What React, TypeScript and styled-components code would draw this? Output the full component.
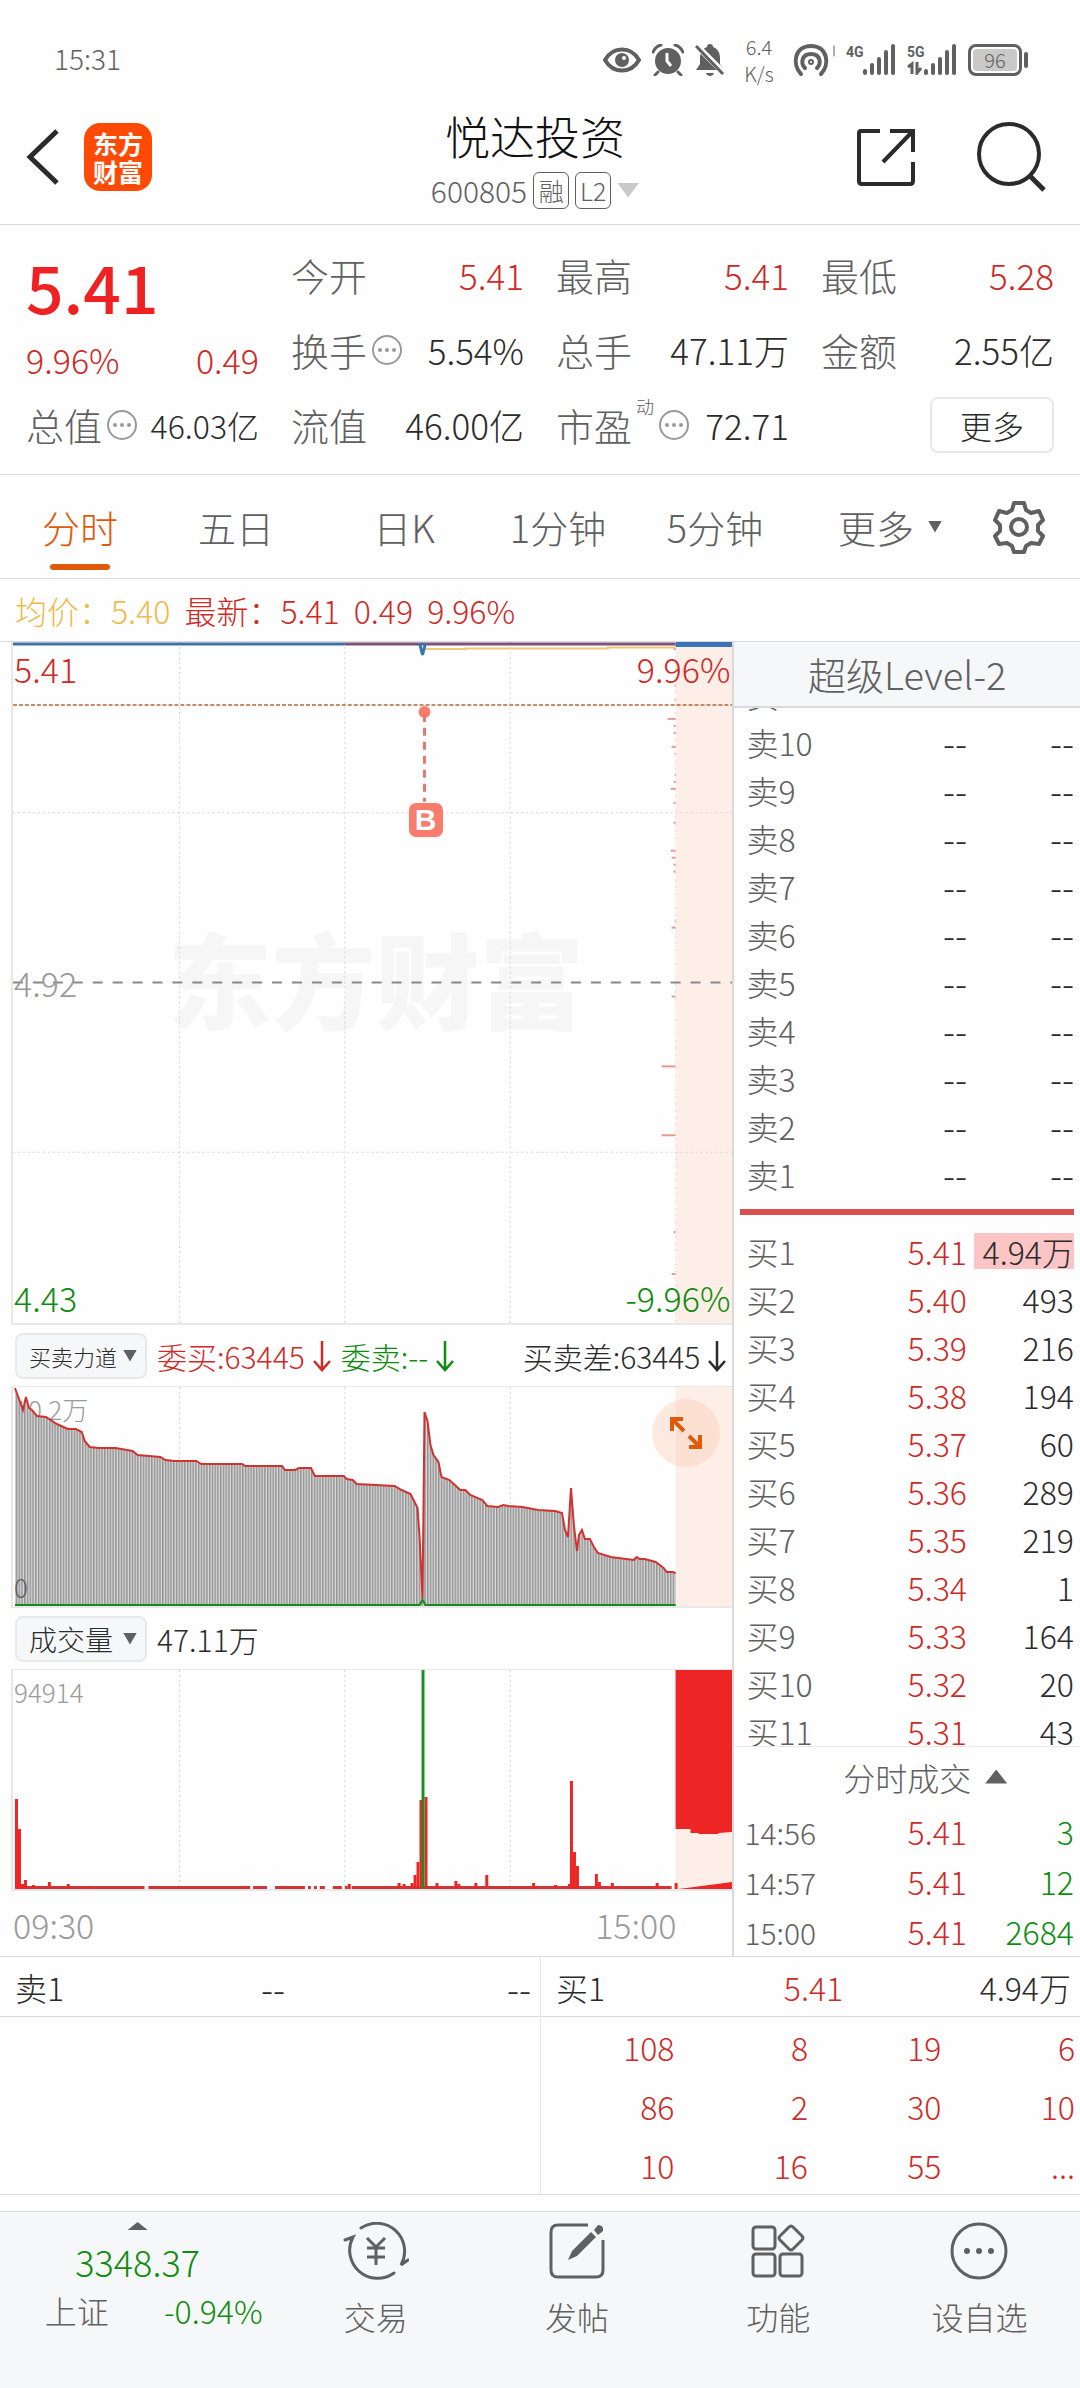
import React from 'react';
import styled, { createGlobalStyle } from 'styled-components';

const c = {
  text: '#2b2b2b',
  grey: '#606060',
  pale: '#9a9a9a',
  red: '#cc2b28',
  green: '#0f8c0f',
  orange: '#e05a0c',
  line: '#d8dadd',
  soft: '#e8e8ea',
  panel: '#f6f7f9',
  pink: '#fdeee7',
};

const Global = createGlobalStyle`
  *, *::before, *::after { box-sizing: border-box; }
  body {
    margin: 0;
    background: #fefefe;
    color: ${c.text};
    font-family: "Noto Sans CJK SC", sans-serif;
    font-size: 32px;
    font-weight: 300;
  }
  button, select { font: inherit; color: inherit; background: none; border: 0; padding: 0; margin: 0; }
  table { border-collapse: collapse; width: 100%; table-layout: fixed; }
  th, td { padding: 0; font-weight: inherit; text-align: right; white-space: nowrap; }
  svg { display: block; flex: none; }
  h1, p, dl, dd, dt { margin: 0; font-weight: inherit; }
`;

type Tone = 'red' | 'green' | 'text' | 'grey';
const Value = styled.span<{ $tone?: Tone; $size?: number }>`
  color: ${(p) => c[p.$tone ?? 'text']};
  font-size: ${(p) => p.$size ?? 32}px;
`;

/* status bar */
const StatusBar = styled.header`
  display: flex;
  align-items: center;
  justify-content: space-between;
  height: 108px;
  padding: 12px 52px 0 54px;
  color: ${c.grey};
`;
const Clock = styled.time`
  font-size: 28px;
  padding-bottom: 4px;
`;
const StatusIcons = styled.div`
  display: flex;
  align-items: center;
  gap: 11px;
`;
const NetSpeed = styled.span`
  width: 46px;
  text-align: center;
  font-size: 20px;
  line-height: 27px;
`;
const Signal = styled.span`
  display: flex;
  align-items: flex-end;
  height: 32px;
`;
const SignalTag = styled.span`
  display: flex;
  flex-direction: column;
  align-self: flex-start;
  gap: 1px;
  width: 16px;
  font: 700 14px/16px Roboto, sans-serif;
  white-space: nowrap;
`;
const Battery = styled.span`
  display: flex;
  align-items: center;
  gap: 2px;
  &::after { content: ''; width: 4px; height: 16px; border-radius: 2px; background: ${c.grey}; }
`;
const BatteryBody = styled.span`
  width: 54px;
  height: 32px;
  border: 3px solid ${c.grey};
  border-radius: 8px;
  padding: 2px;
`;
const BatteryLevel = styled.span`
  display: block;
  border-radius: 4px;
  background: #c9c9c9;
  text-align: center;
  font-size: 20px;
  line-height: 22px;
`;

/* title bar */
const TitleBar = styled.div`
  display: grid;
  grid-template-columns: 1fr auto 1fr;
  align-items: center;
  height: 117px;
  padding: 0 34px 0 24px;
  border-bottom: 1px solid ${c.line};
`;
const Side = styled.div<{ $end?: boolean }>`
  display: flex;
  align-items: center;
  justify-content: ${(p) => (p.$end ? 'flex-end' : 'flex-start')};
  gap: ${(p) => (p.$end ? 60 : 24)}px;
  padding-bottom: 18px;
`;
const IconButton = styled.button`display: flex; color: ${c.text};`;
const AppLogo = styled.span`
  display: grid;
  place-content: center;
  width: 68px;
  height: 68px;
  border-radius: 16px;
  background: #ff4a05;
  color: #fff;
  font-size: 25px;
  font-weight: 700;
  line-height: 28px;
  text-align: center;
`;
const TitleBlock = styled.div`
  display: flex;
  flex-direction: column;
  align-items: center;
`;
const StockName = styled.h1`
  font-size: 45px;
  line-height: 48px;
  color: #111;
`;
const StockCode = styled.div`
  display: flex;
  align-items: center;
  gap: 6px;
  height: 60px;
  color: ${c.grey};
  font-size: 30px;
`;
const Badge = styled.span`
  display: grid;
  place-content: center;
  width: 36px;
  height: 37px;
  border: 1px solid ${c.grey};
  border-radius: 6px;
  font-size: 25px;
`;
const Caret = styled.span<{ $w?: number; $h?: number; $up?: boolean; $color?: string }>`
  flex: none;
  width: ${(p) => p.$w ?? 14}px;
  height: ${(p) => p.$h ?? 12}px;
  background: ${(p) => p.$color ?? c.grey};
  clip-path: ${(p) => (p.$up ? 'polygon(50% 0, 100% 100%, 0 100%)' : 'polygon(0 0, 100% 0, 50% 100%)')};
`;

/* quote summary */
const Quote = styled.section`
  display: grid;
  grid-template-columns: repeat(4, 1fr);
  grid-auto-rows: 75px;
  column-gap: 32px;
  padding: 12px 26px;
  border-bottom: 1px solid ${c.line};
`;
const LastPrice = styled.div`
  grid-row: span 2;
  display: flex;
  flex-direction: column;
  justify-content: space-between;
  color: ${c.red};
`;
const BigPrice = styled.strong`
  font-size: 66px;
  font-weight: 500;
  line-height: 96px;
  color: #ee2222;
`;
const Change = styled.div`
  display: flex;
  justify-content: space-between;
  font-size: 34px;
  line-height: 54px;
`;
const Stat = styled.dl`
  display: flex;
  align-items: center;
  justify-content: space-between;
  white-space: nowrap;
`;
const StatName = styled.dt`
  display: flex;
  align-items: center;
  gap: 4px;
  color: ${c.grey};
  font-size: 38px;
`;
const StatValue = styled.dd<{ $tone?: Tone; $small?: boolean }>`
  color: ${(p) => c[p.$tone ?? 'text']};
  font-size: ${(p) => (p.$small ? 32 : 35)}px;
`;
const Sup = styled.sup`
  font-size: 18px;
  line-height: 18px;
  align-self: flex-start;
`;
const MoreButton = styled.button`
  align-self: center;
  justify-self: end;
  width: 124px;
  height: 56px;
  border: 2px solid ${c.soft};
  border-radius: 8px;
  line-height: 48px;
`;

/* period tabs */
const Tabs = styled.nav`
  display: grid;
  grid-template-columns: 160fr 152fr 184fr 124fr 190fr 160fr 98fr;
  height: 104px;
  padding-right: 12px;
  border-bottom: 1px solid ${c.line};
`;
const Tab = styled.button<{ $on?: boolean }>`
  position: relative;
  display: flex;
  align-items: center;
  justify-content: center;
  gap: 14px;
  font-size: 38px;
  white-space: nowrap;
  color: ${(p) => (p.$on ? c.orange : c.grey)};
  &::after {
    content: '';
    display: ${(p) => (p.$on ? 'block' : 'none')};
    position: absolute;
    left: 50%;
    bottom: 8px;
    width: 60px;
    height: 6px;
    margin-left: -30px;
    border-radius: 3px;
    background: ${c.orange};
  }
`;
const InfoLine = styled.p`
  display: flex;
  align-items: center;
  gap: 14px;
  height: 63px;
  padding-left: 15px;
  border-bottom: 1px solid ${c.line};
  color: ${c.red};
`;
const Average = styled.span`color: #eebb4d;`;

/* main area */
const Main = styled.main`
  display: grid;
  grid-template-columns: 68% 32%;
`;
const ChartColumn = styled.div`
  display: flex;
  flex-direction: column;
  padding-left: 11px;
  border-right: 2px solid ${c.line};
`;
const Plot = styled.div<{ $h: number }>`
  position: relative;
  height: ${(p) => p.$h}px;
  border: solid ${c.soft};
  border-width: 0 0 2px 2px;
`;
const Layer = styled.div`
  position: absolute;
  inset: 0;
  & > svg { width: 100%; height: 100%; }
`;
const PlotLabel = styled.span<{ $y: number; $end?: boolean; $tone: string; $size?: number }>`
  position: absolute;
  top: ${(p) => p.$y}px;
  ${(p) => (p.$end ? 'right: 2px' : 'left: 1px')};
  color: ${(p) => p.$tone};
  font-size: ${(p) => p.$size ?? 34}px;
  line-height: 40px;
`;
const Watermark = styled.span`
  position: absolute;
  inset: 0;
  display: grid;
  place-content: center;
  padding: 0 0 12px 6px;
  font-size: 104px;
  font-weight: 900;
  color: #f6f6f6;
`;
const TradeFlag = styled.span`
  position: absolute;
  left: 55%;
  top: 161px;
  width: 34px;
  height: 34px;
  border-radius: 7px;
  background: #f97c6c;
  color: #fff;
  font: 700 30px/34px "Liberation Sans", sans-serif;
  text-align: center;
`;
const Expand = styled.button`
  position: absolute;
  right: 12px;
  top: 12px;
  display: grid;
  place-content: center;
  width: 68px;
  height: 68px;
  border-radius: 50%;
  background: rgba(250, 205, 180, 0.4);
  color: ${c.orange};
`;
const PlotBar = styled.div`
  display: flex;
  align-items: center;
  gap: 10px;
  height: 62px;
  padding: 0 6px 0 4px;
  border-bottom: 1px solid ${c.soft};
`;
const Picker = styled.label`
  display: flex;
  align-items: center;
  justify-content: space-between;
  width: 132px;
  height: 46px;
  padding: 0 8px 0 12px;
  border: 2px solid ${c.soft};
  border-radius: 8px;
  background: ${c.panel};
`;
const PickerSelect = styled.select<{ $size: number }>`
  appearance: none;
  width: 92px;
  height: 42px;
  font-size: ${(p) => p.$size}px;
`;
const Flow = styled.span<{ $tone?: Tone; $push?: boolean }>`
  display: flex;
  align-items: center;
  gap: 8px;
  margin-left: ${(p) => (p.$push ? 'auto' : 0)};
  font-size: 30px;
  line-height: 40px;
  white-space: nowrap;
  color: ${(p) => c[p.$tone ?? 'text']};
`;
const TimeAxis = styled.div`
  display: flex;
  align-items: center;
  justify-content: space-between;
  height: 64px;
  padding: 2px 56px 0 2px;
  color: ${c.pale};
  font-size: 34px;
`;

/* order book */
const BookColumn = styled.aside`display: flex; flex-direction: column;`;
const BookTitle = styled.button`
  height: 66px;
  border-bottom: 2px solid ${c.line};
  background: ${c.panel};
  color: ${c.grey};
  font-size: 38px;
  line-height: 62px;
`;
const Asks = styled.div`
  display: flex;
  align-items: flex-end;
  height: 492px;
  overflow: hidden;
  padding: 0 6px 2px 12px;
`;
const Bids = styled.div`
  height: 519px;
  overflow: hidden;
  padding: 0 6px 0 12px;
`;
const Divider = styled.hr`
  width: calc(100% - 12px);
  height: 6px;
  margin: 9px 6px 12px;
  border: 0;
  background: #d8504e;
`;
const BookTable = styled.table<{ $row: number }>`
  tr { height: ${(p) => p.$row}px; line-height: 40px; }
  th { text-align: left; color: ${c.grey}; }
  td:nth-child(2) { width: 106px; }
  td:nth-child(3) { width: 107px; }
`;
const Marked = styled.span`
  display: inline-block;
  width: 100px;
  line-height: 36px;
  background: #fac5c4;
`;
const TradesTitle = styled.button`
  display: flex;
  align-items: center;
  justify-content: center;
  gap: 14px;
  height: 60px;
  border-top: 1px solid ${c.soft};
  color: ${c.grey};
  line-height: 50px;
  padding-left: 36px;
`;
const Trades = styled.div`padding: 0 6px 0 10px;`;

/* queue */
const Queue = styled.section`
  display: grid;
  grid-template-columns: 1fr 1fr;
  border-top: 1px solid ${c.line};
  border-bottom: 1px solid ${c.line};
`;
const QueueSide = styled.div`
  & + & { border-left: 1px solid ${c.soft}; }
`;
const QueueHead = styled.div`
  display: grid;
  grid-template-columns: 1fr 1fr 1fr;
  align-items: center;
  height: 60px;
  padding: 0 9px 0 15px;
  border-bottom: 1px solid ${c.line};
  text-align: right;
  & > :first-child { text-align: left; }
  & > :nth-child(2) { text-align: center; }
`;
const QueueTable = styled.table`
  width: calc(100% - 5px);
  color: ${c.red};
  line-height: 50px;
  tr { height: 59px; }
`;

/* bottom bar */
const BottomBar = styled.nav`
  display: grid;
  grid-template-columns: 275fr repeat(4, 201fr);
  height: 177px;
  margin-top: 16px;
  border-top: 1px solid ${c.line};
  background: ${c.panel};
`;
const IndexCard = styled.button`
  display: flex;
  flex-direction: column;
  align-items: center;
  padding-top: 10px;
  color: ${c.green};
  font-size: 36px;
  line-height: 62px;
`;
const IndexRow = styled.span`
  display: flex;
  justify-content: space-between;
  width: 250px;
  padding-left: 32px;
  font-size: 32px;
  line-height: 36px;
`;
const IndexName = styled.span`color: ${c.grey};`;
const NavButton = styled.button`
  display: flex;
  flex-direction: column;
  align-items: center;
  gap: 12px;
  padding-top: 10px;
  color: ${c.grey};
  line-height: 48px;
`;

const Dots = () => (
  <svg width="32" height="32" viewBox="0 0 32 32" fill="#999">
    <circle cx="16" cy="16" r="14" fill="none" stroke="#999" strokeWidth="2" />
    <circle cx="9" cy="16" r="2" /><circle cx="16" cy="16" r="2" /><circle cx="23" cy="16" r="2" />
  </svg>
);
const DownArrow = () => (
  <svg width="18" height="32" viewBox="0 0 18 32" fill="none" stroke="currentColor" strokeWidth="2.5">
    <path d="M9 1v29M1 21l8 9 8-9" />
  </svg>
);
const Bars = () => (
  <svg width="34" height="32" viewBox="0 0 34 32" stroke={c.grey} strokeWidth="4" strokeLinecap="round">
    <path d="M3 27v2M10 21v8M17 15v14M24 8v21M31 2v27" />
  </svg>
);
const Gear = () => (
  <svg width="54" height="54" viewBox="0 0 54 54" fill="none" stroke={c.grey} strokeWidth="4" strokeLinejoin="round">
    <path d="M22 3h10l2 7 5 3 8-2 4 9-5 5v6l5 5-4 8-8-1-5 3-2 6H22l-2-6-5-3-8 1-4-8 5-5v-6l-5-5 4-9 8 2 5-3z" />
    <circle cx="27" cy="27" r="8" />
  </svg>
);

const VLINES = [167, 333, 499];
const Grid = ({ h }: { h: number }) => (
  <g stroke="#d4d4d4" strokeDasharray="2 3">
    {VLINES.map((x) => <path key={x} d={`M${x} 0V${h}`} />)}
  </g>
);

const TICKS: [number, number][] = [
  [7, 2], [44, 1], [58, 1], [77, 8], [84, 2], [91, 2], [105, 4], [112, 1], [133, 1], [140, 2], [147, 5], [161, 2],
  [181, 2], [209, 5], [216, 4], [223, 2], [230, 2], [279, 1], [286, 4], [355, 4], [425, 14], [494, 14], [591, 2], [633, 4], [668, 2],
];

const PriceChart = () => (
  <svg viewBox="0 0 722 682" preserveAspectRatio="none" fill="none">
    <rect x="665" width="57" height="682" fill={c.pink} />
    <Grid h={682} />
    <path d="M0 171H722M0 511H722" stroke="#d4d4d4" strokeDasharray="2 3" />
    <path d="M0 341H722" stroke="#888" strokeWidth="2" strokeDasharray="10 10" />
    <path d="M0 63H722" stroke="#b0683a" strokeWidth="1.5" strokeDasharray="4 2" />
    <path d="M412 7H455V6.5H597V5.5H665" stroke="#f0c878" strokeWidth="2" />
    <path d="M0 2H333" stroke="#3f70a8" strokeWidth="3" />
    <path d="M333 2H665" stroke="#7d5278" strokeWidth="3" />
    <path d="M665 2.5H722" stroke="#3b73b5" strokeWidth="5" />
    <path d="M408 1L411 13L414 1" stroke="#3b73b5" strokeWidth="3" />
    <path d="M665 0V682" stroke="#e8bdb5" strokeDasharray="1 6" />
    {TICKS.map(([y, w]) => <path key={y} d={`M${665 - w} ${y}H665`} stroke="#e59a94" strokeWidth="2" />)}
    <circle cx="413" cy="70" r="6" fill="#f97c6c" />
    <path d="M413 72V160" stroke="#e8786c" strokeWidth="3" strokeDasharray="8 6" />
  </svg>
);

const FORCE =
  '2,1 10,23 13,10 16,21 19,23 24,29 33,30 44,37 55,42 63,42 69,45 72,54 77,60 86,61 103,61 120,64 125,68 148,70 153,73 162,74 184,74 189,77 230,77 233,79 270,79 273,83 283,83 287,81 299,81 303,89 332,89 335,92 341,93 345,97 383,99 390,103 399,107 402,113 406,121 408,149 411,212 413,25 416,34 419,58 422,68 427,75 430,90 438,93 449,103 454,103 459,108 471,113 476,119 487,120 492,118 497,119 511,120 527,123 544,124 551,126 554,143 557,150 560,101 563,139 566,164 568,148 571,143 574,152 579,152 583,160 587,166 600,170 623,173 626,170 629,172 634,172 645,175 653,181 656,185 662,185 665,186';

const ForceChart = () => (
  <svg viewBox="0 0 722 219" preserveAspectRatio="none" fill="none">
    <defs>
      <pattern id="hatch" width="2.77" height="8" patternUnits="userSpaceOnUse">
        <rect width="2.77" height="8" fill="#d9d9d9" />
        <rect width="1.5" height="8" fill="#949494" />
      </pattern>
    </defs>
    <rect x="665" width="57" height="219" fill={c.pink} />
    <Grid h={219} />
    <polygon points={`2,219 ${FORCE} 665,219`} fill="url(#hatch)" />
    <polyline points={FORCE} stroke="#cf3331" strokeWidth="2" />
    <path d="M2 218H408L411 213L414 218H665" stroke="#178a1c" strokeWidth="2" />
  </svg>
);

const VOLUME: [number, number][] = [
  [2, 90], [5, 60], [8, 5], [11, 9], [19, 4], [35, 7], [54, 5], [76, 3], [336, 5], [386, 6], [391, 5], [399, 6], [402, 14],
  [405, 27], [408, 89], [413, 92], [424, 6], [443, 8], [446, 5], [463, 6], [474, 14], [521, 6], [543, 4], [557, 5], [559, 108],
  [562, 37], [565, 23], [584, 15], [587, 7], [600, 6], [645, 6], [664, 6],
];
const BASE: [number, number][] = [
  [2, 132], [136, 238], [241, 255], [263, 293], [296, 299], [302, 305], [308, 313], [321, 330], [333, 336], [340, 661],
];

const VolumeChart = () => (
  <svg viewBox="0 0 722 219" preserveAspectRatio="none" fill="#ed2525">
    <rect x="665" width="57" height="219" fill={c.pink} />
    <Grid h={219} />
    {BASE.map(([a, b]) => <rect key={a} x={a} y="216" width={b - a} height="3" fill="#d23535" />)}
    {VOLUME.map(([x, h]) => <rect key={x} x={x} y={219 - h} width="3" height={h} />)}
    <rect x="410" width="3" height="219" fill="#1d8f22" />
    <path d="M665 0H722V162L708 163V164H688V163H680V159H665z" />
    <path d="M668 219L722 212V219z" />
  </svg>
);

const asks = ['11', '10', '9', '8', '7', '6', '5', '4', '3', '2', '1'];
const bids: [string, string, string][] = [
  ['1', '5.41', '4.94万'], ['2', '5.40', '493'], ['3', '5.39', '216'], ['4', '5.38', '194'], ['5', '5.37', '60'],
  ['6', '5.36', '289'], ['7', '5.35', '219'], ['8', '5.34', '1'], ['9', '5.33', '164'], ['10', '5.32', '20'], ['11', '5.31', '43'],
];
const trades = [['14:56', '5.41', '3'], ['14:57', '5.41', '12'], ['15:00', '5.41', '2684']];
const queue = [['108', '8', '19', '6'], ['86', '2', '30', '10'], ['10', '16', '55', '...']];

type StatProps = { name: string; value: string; tone?: Tone; dots?: boolean; small?: boolean; sup?: string };
const StatItem = ({ name, value, tone, dots, small, sup }: StatProps) => (
  <Stat>
    <StatName>{name}{sup && <Sup>{sup}</Sup>}{dots && <Dots />}</StatName>
    <StatValue $tone={tone} $small={small}>{value}</StatValue>
  </Stat>
);

export default function App() {
  return (
    <>
      <Global />
      <StatusBar>
        <Clock>15:31</Clock>
        <StatusIcons>
          <svg width="38" height="26" viewBox="0 0 38 26" fill={c.grey}>
            <path d="M2 13C10-1 28-1 36 13C28 27 10 27 2 13z" fill="none" stroke={c.grey} strokeWidth="4" />
            <circle cx="19" cy="13" r="7" /><circle cx="21" cy="11" r="2" fill="#fff" />
          </svg>
          <svg width="32" height="32" viewBox="0 0 32 32" fill={c.grey}>
            <circle cx="16" cy="17" r="13" />
            <path d="M1 8Q4 2 9 1M31 8Q28 2 23 1M6 28l-3 3M26 28l3 3" fill="none" stroke={c.grey} strokeWidth="3" strokeLinecap="round" />
            <path d="M15 9v8l4 5" fill="none" stroke="#fff" strokeWidth="3" />
          </svg>
          <svg width="30" height="34" viewBox="0 0 30 34" fill={c.grey}>
            <path d="M15 1c2 0 3 1 3 3 5 2 7 6 7 11v6l4 6H1l4-6v-6c0-5 2-9 7-11 0-2 1-3 3-3zM11 30h8c-1 4-7 4-8 0z" />
            <path d="M2 3L29 30" stroke="#fefefe" strokeWidth="6" /><path d="M1 3L28 31" stroke={c.grey} strokeWidth="3" />
          </svg>
          <NetSpeed>6.4 K/s</NetSpeed>
          <svg width="42" height="34" viewBox="0 0 42 34" fill="none" stroke={c.grey} strokeWidth="4" strokeLinecap="round">
            <path d="M8 31C-1 22 1 3 18 3s19 19 10 28M12 25c-5-5-3-14 6-14s11 9 6 14" /><circle cx="18" cy="19" r="1" />
            <path d="M41 3v10" strokeWidth="1" />
          </svg>
          <Signal><SignalTag>4G</SignalTag><Bars /></Signal>
          <Signal>
            <SignalTag>
              5G
              <svg width="16" height="14" viewBox="0 0 16 14" fill="none" stroke={c.grey} strokeWidth="3"><path d="M1 6l4-3v10M10 1v11l4-5" /></svg>
            </SignalTag>
            <Bars />
          </Signal>
          <Battery><BatteryBody><BatteryLevel>96</BatteryLevel></BatteryBody></Battery>
        </StatusIcons>
      </StatusBar>

      <TitleBar>
        <Side>
          <IconButton aria-label="返回">
            <svg width="36" height="56" viewBox="0 0 36 56" fill="none" stroke="currentColor" strokeWidth="5"><path d="M33 2L6 28l27 26" /></svg>
          </IconButton>
          <AppLogo>东方<br />财富</AppLogo>
        </Side>
        <TitleBlock>
          <StockName>悦达投资</StockName>
          <StockCode>600805<Badge>融</Badge><Badge>L2</Badge><Caret $w={22} $h={15} $color="#c9c9c9" /></StockCode>
        </TitleBlock>
        <Side $end>
          <IconButton aria-label="分享">
            <svg width="60" height="60" viewBox="0 0 60 60" fill="none" stroke="currentColor" strokeWidth="4">
              <path d="M24 4H5Q3 4 3 6V54Q3 57 6 57H54Q57 57 57 54V35M57 25V4H34M56 5L27 35" />
            </svg>
          </IconButton>
          <IconButton aria-label="搜索">
            <svg width="70" height="70" viewBox="0 0 70 70" fill="none" stroke="currentColor" strokeWidth="4">
              <circle cx="33" cy="32" r="30" /><path d="M54 54L68 68" strokeWidth="5" />
            </svg>
          </IconButton>
        </Side>
      </TitleBar>

      <Quote>
        <LastPrice>
          <BigPrice>5.41</BigPrice>
          <Change><span>9.96%</span><span>0.49</span></Change>
        </LastPrice>
        <StatItem name="今开" value="5.41" tone="red" />
        <StatItem name="最高" value="5.41" tone="red" />
        <StatItem name="最低" value="5.28" tone="red" />
        <StatItem name="换手" value="5.54%" dots />
        <StatItem name="总手" value="47.11万" />
        <StatItem name="金额" value="2.55亿" />
        <StatItem name="总值" value="46.03亿" dots small />
        <StatItem name="流值" value="46.00亿" />
        <StatItem name="市盈" value="72.71" dots sup="动" />
        <MoreButton>更多</MoreButton>
      </Quote>

      <Tabs>
        <Tab $on>分时</Tab>
        <Tab>五日</Tab>
        <Tab>日K</Tab>
        <Tab>1分钟</Tab>
        <Tab>5分钟</Tab>
        <Tab>更多<Caret /></Tab>
        <Tab aria-label="设置"><Gear /></Tab>
      </Tabs>

      <InfoLine>
        <Average>均价：5.40</Average>
        <span>最新：5.41</span><span>0.49</span><span>9.96%</span>
      </InfoLine>

      <Main>
        <ChartColumn>
          <Plot $h={683}>
            <Watermark>东方财富</Watermark>
            <Layer><PriceChart /></Layer>
            <PlotLabel $y={7} $tone={c.red}>5.41</PlotLabel>
            <PlotLabel $y={7} $tone={c.red} $end>9.96%</PlotLabel>
            <PlotLabel $y={321} $tone={c.pale}>4.92</PlotLabel>
            <PlotLabel $y={636} $tone={c.green}>4.43</PlotLabel>
            <PlotLabel $y={636} $tone={c.green} $end>-9.96%</PlotLabel>
            <TradeFlag>B</TradeFlag>
          </Plot>
          <PlotBar>
            <Picker>
              <PickerSelect $size={22} aria-label="副图指标一"><option>买卖力道</option></PickerSelect>
              <Caret />
            </Picker>
            <Flow $tone="red"><span>委买:63445</span><DownArrow /></Flow>
            <Flow $tone="green"><span>委卖:--</span><DownArrow /></Flow>
            <Flow $push><span>买卖差:63445</span><DownArrow /></Flow>
          </PlotBar>
          <Plot $h={221}>
            <PlotLabel $y={2} $tone={c.pale} $size={26}>10.2万</PlotLabel>
            <Layer><ForceChart /></Layer>
            <PlotLabel $y={180} $tone={c.grey} $size={26}>0</PlotLabel>
            <Expand aria-label="展开">
              <svg width="36" height="36" viewBox="0 0 36 36" fill="none" stroke="currentColor" strokeWidth="4">
                <path d="M15 4H4v12M4 4l12 12M21 32h11V20M32 32L21 21" />
              </svg>
            </Expand>
          </Plot>
          <PlotBar>
            <Picker>
              <PickerSelect $size={28} aria-label="副图指标二"><option>成交量</option></PickerSelect>
              <Caret />
            </Picker>
            <Value $size={30}>47.11万</Value>
          </PlotBar>
          <Plot $h={221}>
            <Layer><VolumeChart /></Layer>
            <PlotLabel $y={2} $tone={c.pale} $size={26}>94914</PlotLabel>
          </Plot>
          <TimeAxis><time>09:30</time><time>15:00</time></TimeAxis>
        </ChartColumn>

        <BookColumn>
          <BookTitle>超级Level-2</BookTitle>
          <Asks>
            <BookTable $row={48}>
              <tbody>
                {asks.map((n) => (
                  <tr key={n}>
                    <th scope="row">卖{n}</th>
                    <td><Value $size={36}>--</Value></td>
                    <td><Value $size={36}>--</Value></td>
                  </tr>
                ))}
              </tbody>
            </BookTable>
          </Asks>
          <Divider />
          <Bids>
            <BookTable $row={48}>
              <tbody>
                {bids.map(([n, price, vol]) => (
                  <tr key={n}>
                    <th scope="row">买{n}</th>
                    <td><Value $tone="red">{price}</Value></td>
                    <td>{n === '1' ? <Marked>{vol}</Marked> : vol}</td>
                  </tr>
                ))}
              </tbody>
            </BookTable>
          </Bids>
          <TradesTitle>分时成交<Caret $w={22} $h={14} $up /></TradesTitle>
          <Trades>
            <BookTable $row={50}>
              <tbody>
                {trades.map(([time, price, vol]) => (
                  <tr key={time}>
                    <th scope="row"><Value $tone="grey" $size={30}>{time}</Value></th>
                    <td><Value $tone="red">{price}</Value></td>
                    <td><Value $tone="green">{vol}</Value></td>
                  </tr>
                ))}
              </tbody>
            </BookTable>
          </Trades>
        </BookColumn>
      </Main>

      <Queue>
        <QueueSide>
          <QueueHead><span>卖1</span><Value $size={36}>--</Value><Value $size={36}>--</Value></QueueHead>
        </QueueSide>
        <QueueSide>
          <QueueHead><span>买1</span><Value $tone="red">5.41</Value><span>4.94万</span></QueueHead>
          <QueueTable>
            <tbody>
              {queue.map((row) => <tr key={row[0]}>{row.map((v) => <td key={v}>{v}</td>)}</tr>)}
            </tbody>
          </QueueTable>
        </QueueSide>
      </Queue>

      <BottomBar>
        <IndexCard>
          <Caret $w={20} $h={8} $up />
          3348.37
          <IndexRow><IndexName>上证</IndexName><span>-0.94%</span></IndexRow>
        </IndexCard>
        <NavButton>
          <svg width="66" height="58" viewBox="0 0 66 58" fill="none" stroke="currentColor" strokeWidth="3" strokeLinecap="round">
            <path d="M18 6A28 28 0 0 1 58 43L65 38M51 51A28 28 0 0 1 10 15L2 18" />
            <path d="M24 16l9 9 9-9M33 25v18M24 26h18M24 35h18" strokeLinecap="butt" />
          </svg>
          交易
        </NavButton>
        <NavButton>
          <svg width="58" height="58" viewBox="0 0 58 58" fill="none" stroke="currentColor" strokeWidth="3">
            <path d="M40 3H10Q3 3 3 10V48Q3 55 10 55H48Q55 55 55 48V18" />
            <path d="M20 38l4-9L43 10l5 5L29 34z" fill="currentColor" stroke="none" />
            <path d="M46 8l4-5q6 0 5 6l-5 4z" fill="currentColor" stroke="none" />
          </svg>
          发帖
        </NavButton>
        <NavButton>
          <svg width="58" height="58" viewBox="0 0 58 58" fill="none" stroke="currentColor" strokeWidth="3">
            <rect x="4" y="5" width="22" height="22" rx="3" /><rect x="4" y="32" width="22" height="22" rx="3" />
            <rect x="31" y="32" width="22" height="22" rx="3" />
            <path d="M40 5q2-2 4 0l9 9q2 2 0 4l-9 9q-2 2-4 0l-9-9q-2-2 0-4z" />
          </svg>
          功能
        </NavButton>
        <NavButton>
          <svg width="58" height="58" viewBox="0 0 58 58" fill="currentColor">
            <circle cx="29" cy="29" r="27" fill="none" stroke="currentColor" strokeWidth="3" />
            <circle cx="17" cy="29" r="3" /><circle cx="29" cy="29" r="3" /><circle cx="41" cy="29" r="3" />
          </svg>
          设自选
        </NavButton>
      </BottomBar>
    </>
  );
}
